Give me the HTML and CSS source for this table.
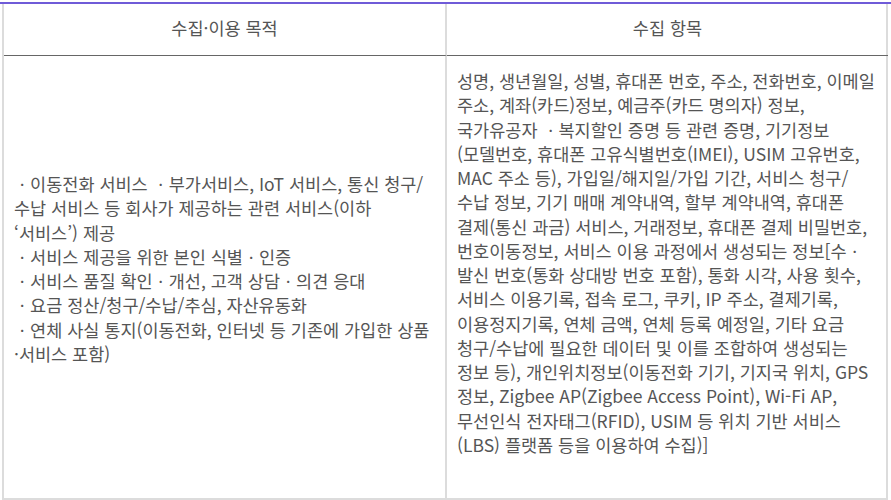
FILE: index.html
```html
<!DOCTYPE html>
<html lang="ko">
<head>
<meta charset="utf-8">
<link rel="stylesheet" href="styles.css">
</head>
<body>
<div class="wrap">
  <div class="table">
    <div class="th th-left">수집·이용 목적</div>
    <div class="th th-right">수집 항목</div>
    <div class="td td-left">
      <div class="cell-text">
        <span class="ln">ㆍ이동전화 서비스 ㆍ부가서비스, IoT 서비스, 통신 청구/</span>
        <span class="ln">수납 서비스 등 회사가 제공하는 관련 서비스(이하</span>
        <span class="ln">‘서비스’) 제공</span>
        <span class="ln">ㆍ서비스 제공을 위한 본인 식별ㆍ인증</span>
        <span class="ln">ㆍ서비스 품질 확인ㆍ개선, 고객 상담ㆍ의견 응대</span>
        <span class="ln">ㆍ요금 정산/청구/수납/추심, 자산유동화</span>
        <span class="ln">ㆍ연체 사실 통지(이동전화, 인터넷 등 기존에 가입한 상품</span>
        <span class="ln">·서비스 포함)</span>
      </div>
    </div>
    <div class="td td-right">
      <div class="cell-text">
        <span class="ln">성명, 생년월일, 성별, 휴대폰 번호, 주소, 전화번호, 이메일</span>
        <span class="ln">주소, 계좌(카드)정보, 예금주(카드 명의자) 정보,</span>
        <span class="ln">국가유공자 ㆍ복지할인 증명 등 관련 증명, 기기정보</span>
        <span class="ln">(모델번호, 휴대폰 고유식별번호(IMEI), USIM 고유번호,</span>
        <span class="ln">MAC 주소 등), 가입일/해지일/가입 기간, 서비스 청구/</span>
        <span class="ln">수납 정보, 기기 매매 계약내역, 할부 계약내역, 휴대폰</span>
        <span class="ln">결제(통신 과금) 서비스, 거래정보, 휴대폰 결제 비밀번호,</span>
        <span class="ln">번호이동정보, 서비스 이용 과정에서 생성되는 정보[수ㆍ</span>
        <span class="ln">발신 번호(통화 상대방 번호 포함), 통화 시각, 사용 횟수,</span>
        <span class="ln">서비스 이용기록, 접속 로그, 쿠키, IP 주소, 결제기록,</span>
        <span class="ln">이용정지기록, 연체 금액, 연체 등록 예정일, 기타 요금</span>
        <span class="ln">청구/수납에 필요한 데이터 및 이를 조합하여 생성되는</span>
        <span class="ln">정보 등), 개인위치정보(이동전화 기기, 기지국 위치, GPS</span>
        <span class="ln">정보, Zigbee AP(Zigbee Access Point), Wi-Fi AP,</span>
        <span class="ln">무선인식 전자태그(RFID), USIM 등 위치 기반 서비스</span>
        <span class="ln">(LBS) 플랫폼 등을 이용하여 수집)]</span>
      </div>
    </div>
  </div>
</div>
</body>
</html>
```

FILE: styles.css
```css
html, body {
  margin: 0;
  padding: 0;
  background: #fff;
}
body {
  font-family: "Noto Sans CJK KR", "Noto Sans", sans-serif;
  color: #555;
  padding-top: 2px;
}
.wrap {
  border-top: 2px solid #6f5bd8;
}
.table {
  display: grid;
  grid-template-columns: 443px 441px;
  margin-left: 2px;
  width: 886px;
  border-left: 2px solid #dcdcdc;
  border-right: 2px solid #dcdcdc;
  border-bottom: 2px solid #dcdcdc;
  box-sizing: border-box;
}
.th {
  height: 52px;
  display: flex;
  align-items: center;
  justify-content: center;
  font-size: 17.5px;
  color: #555;
  border-bottom: 1px solid #666;
  box-sizing: border-box;
  padding-bottom: 4px;
}
.th-left, .td-left {
  border-right: 2px solid #dcdcdc;
}
.td {
  height: 442px;
  box-sizing: border-box;
  font-size: 17.5px;
  line-height: 24.25px;
  display: flex;
}
.td-left {
  align-items: center;
  padding: 0 0 16px 10px;
}
.td-right {
  align-items: flex-start;
  padding: 13px 0 0 10px;
}
.ln {
  display: block;
  white-space: nowrap;
}
```
